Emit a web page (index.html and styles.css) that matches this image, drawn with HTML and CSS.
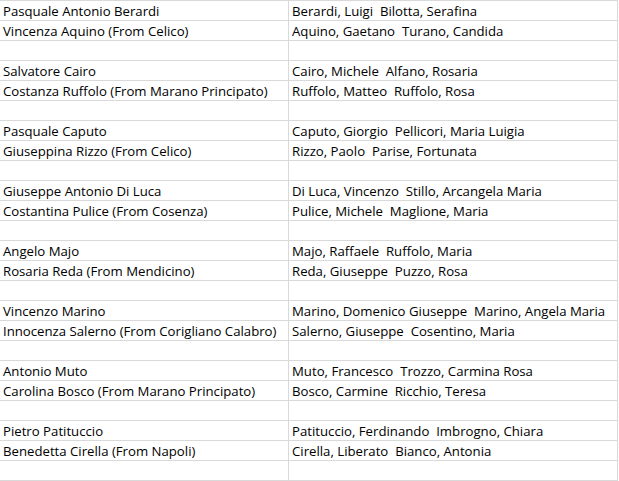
FILE: index.html
```html
<!DOCTYPE html>
<html>
<head>
<meta charset="utf-8">
<link rel="stylesheet" href="styles.css">
</head>
<body>
<table class="sheet">
<tr><td>Pasquale Antonio Berardi</td><td>Berardi, Luigi  Bilotta, Serafina</td></tr>
<tr><td>Vincenza Aquino (From Celico)</td><td>Aquino, Gaetano  Turano, Candida</td></tr>
<tr><td></td><td></td></tr>
<tr><td>Salvatore Cairo</td><td>Cairo, Michele  Alfano, Rosaria</td></tr>
<tr><td>Costanza Ruffolo (From Marano Principato)</td><td>Ruffolo, Matteo  Ruffolo, Rosa</td></tr>
<tr><td></td><td></td></tr>
<tr><td>Pasquale Caputo</td><td>Caputo, Giorgio  Pellicori, Maria Luigia</td></tr>
<tr><td>Giuseppina Rizzo (From Celico)</td><td>Rizzo, Paolo  Parise, Fortunata</td></tr>
<tr><td></td><td></td></tr>
<tr><td>Giuseppe Antonio Di Luca</td><td>Di Luca, Vincenzo  Stillo, Arcangela Maria</td></tr>
<tr><td>Costantina Pulice (From Cosenza)</td><td>Pulice, Michele  Maglione, Maria</td></tr>
<tr><td></td><td></td></tr>
<tr><td>Angelo Majo</td><td>Majo, Raffaele  Ruffolo, Maria</td></tr>
<tr><td>Rosaria Reda (From Mendicino)</td><td>Reda, Giuseppe  Puzzo, Rosa</td></tr>
<tr><td></td><td></td></tr>
<tr><td>Vincenzo Marino</td><td>Marino, Domenico Giuseppe  Marino, Angela Maria</td></tr>
<tr><td>Innocenza Salerno (From Corigliano Calabro)</td><td>Salerno, Giuseppe  Cosentino, Maria</td></tr>
<tr><td></td><td></td></tr>
<tr><td>Antonio Muto</td><td>Muto, Francesco  Trozzo, Carmina Rosa</td></tr>
<tr><td>Carolina Bosco (From Marano Principato)</td><td>Bosco, Carmine  Ricchio, Teresa</td></tr>
<tr><td></td><td></td></tr>
<tr><td>Pietro Patituccio</td><td>Patituccio, Ferdinando  Imbrogno, Chiara</td></tr>
<tr><td>Benedetta Cirella (From Napoli)</td><td>Cirella, Liberato  Bianco, Antonia</td></tr>
<tr><td></td><td></td></tr>
</table>
</body>
</html>
```
FILE: styles.css
```css
html, body {
  margin: 0;
  padding: 0;
  background: #ffffff;
}
.sheet {
  border-collapse: collapse;
  table-layout: fixed;
  width: 618px;
  font-family: "Open Sans", sans-serif;
  font-size: 13.2px;
  color: #000000;
}
.sheet td {
  height: 18px;
  padding: 1px 0 0 3px;
  border: 1px solid #d9d9d9;
  white-space: pre;
  overflow: hidden;
  line-height: 18px;
  vertical-align: middle;
}
.sheet td:first-child {
  width: 285px;
  border-left: none;
}
```
